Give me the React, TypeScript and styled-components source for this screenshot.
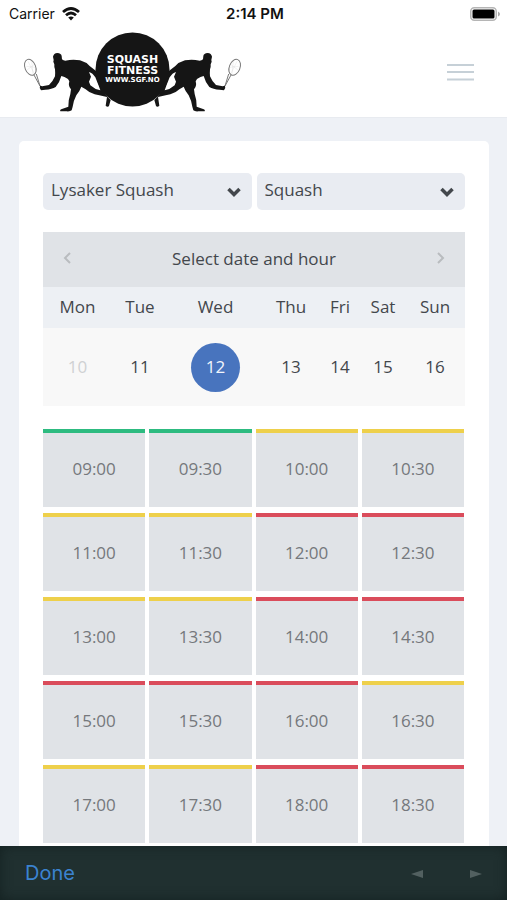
import React, { useState } from "react";
import styled, { createGlobalStyle } from "styled-components";

const GlobalStyle = createGlobalStyle`
  *, *::before, *::after { box-sizing: border-box; }
  body { margin: 0; background: #eef1f6; color: #43474c; font: 17px/24px "Open Sans", "Noto Sans", sans-serif; }
  button, select { font: inherit; color: inherit; border: 0; margin: 0; padding: 0; background: none; cursor: pointer; }
`;

const Screen = styled.div`
  display: flex;
  flex-direction: column;
  height: 100vh;
`;

const StatusBar = styled.div`
  display: grid;
  grid-template-columns: 1fr auto 1fr;
  align-items: center;
  height: 28px;
  padding: 0 6px 0 9px;
  background: #fff;
  color: #111;
  font: 14px/28px Inter, sans-serif;
`;

const Carrier = styled.span`
  display: flex;
  align-items: center;
  gap: 7px;
`;

const Clock = styled.span`
  font-size: 15px;
  font-weight: 600;
`;

const BatteryIcon = styled.svg`
  justify-self: end;
`;

const Header = styled.header`
  display: flex;
  justify-content: space-between;
  align-items: center;
  height: 90px;
  padding: 0 33px 2px 20px;
  background: #fff;
  border-bottom: 1px solid #e8ebf0;
`;

const LogoLink = styled.a`
  display: flex;
`;

const MenuButton = styled.button`
  display: flex;
`;

const Main = styled.main`
  flex: 1;
  min-height: 0;
  display: flex;
  flex-direction: column;
  overflow: hidden auto;
  padding: 23px 18px 0 19px;
`;

const Card = styled.section`
  flex: 1 0 auto;
  padding: 32px 24px 0;
  background: #fff;
  border-radius: 5px 5px 0 0;
`;

const Filters = styled.form`
  display: grid;
  grid-template-columns: 1fr 1fr;
  gap: 5px;
  margin-bottom: 22px;
`;

const SelectField = styled.label`
  position: relative;
  display: block;
`;

const Select = styled.select`
  display: block;
  width: 100%;
  height: 37px;
  padding: 0 32px 4px 8px;
  appearance: none;
  background: #e9ecf2;
  border-radius: 5px;
`;

const SelectArrow = styled.svg`
  position: absolute;
  right: 11px;
  top: 14px;
  pointer-events: none;
`;

const Calendar = styled.section`
  margin-bottom: 23px;
`;

const CalendarHead = styled.div`
  display: flex;
  justify-content: space-between;
  align-items: center;
  height: 55px;
  padding: 0 18px 2px;
  background: #e0e3e7;
`;

const CalendarTitle = styled.h1`
  margin: 0;
  font: inherit;
`;

const StepButton = styled.button`
  display: flex;
  padding: 4px 0 6px;
`;

const WeekTable = styled.table`
  width: 100%;
  table-layout: fixed;
  border-collapse: collapse;
  text-align: center;
`;

const DayName = styled.th`
  height: 41px;
  padding: 0 0 2px;
  background: #edf0f4;
  font-weight: 400;
`;

const DateCell = styled.td`
  height: 78px;
  padding: 0;
  background: #f8f8f8;
`;

const DateButton = styled.button<{ $selected: boolean }>`
  width: ${(p) => (p.$selected ? "49px" : "32px")};
  height: 49px;
  border-radius: 50%;
  background: ${(p) => (p.$selected ? "#4874be" : "transparent")};
  color: ${(p) => (p.$selected ? "#f2f6fc" : "inherit")};
  &:disabled { color: #cfd1d3; cursor: default; }
`;

const slotColors = { free: "#2dbb80", partial: "#eed04b", full: "#da4c5b" };
type Availability = keyof typeof slotColors;

const SlotGrid = styled.div`
  display: grid;
  grid-template-columns: repeat(4, 1fr);
  gap: 6px 4px;
  padding-right: 1px;
`;

const Slot = styled.button<{ $state: Availability }>`
  height: 78px;
  padding-bottom: 2px;
  border-top: 4px solid ${(p) => slotColors[p.$state]};
  background: #e0e3e7;
  color: #75787c;
`;

const Toolbar = styled.footer`
  display: flex;
  justify-content: space-between;
  align-items: center;
  flex: none;
  height: 54px;
  padding: 0 25px;
  background: #203030;
  box-shadow: inset 0 0 12px #142121;
`;

const DoneButton = styled.button`
  color: #3b83d0;
  font: 20px/24px Inter, sans-serif;
`;

const HistoryButtons = styled.div`
  display: flex;
  gap: 47px;
`;

const HistoryButton = styled.button`
  display: flex;
  padding-top: 2px;
`;

function Player() {
  return (
    <g>
      <g fill="none" stroke="#777">
        <ellipse cx="31" cy="118" rx="16" ry="25" transform="rotate(-22 31 118)" strokeWidth="3" />
        <path d="M24 100L42 136M35 98L39 139M19 115L46 118M21 126L45 108" strokeWidth="1" opacity=".3" />
        <path d="M42 141L60 174M49 138L60 174" strokeWidth="3" />
      </g>
      <path
        fill="#151515"
        fillRule="evenodd"
        d="M99 86Q101 76 112 75Q124 76 125 84L126 94Q130 98 136 98Q158 93 180 97Q198 102 209 114Q225 127 246 142L250 188L262 206L272 216L267 234Q263 239 257 233L261 207Q240 203 224 199Q208 195 197 184L184 176Q179 190 169 202Q161 217 158 236L155 247Q150 251 140 250L121 250Q118 244 128 242L145 236Q145 214 151 198L153 184Q144 174 148 160L144 153Q133 146 124 144Q119 163 107 177Q96 184 76 185L63 187Q57 181 60 173L67 175L87 171Q98 162 105 145Q106 135 105 124Q102 118 103 109L100 101L101 96ZM207 132L213 146L207 161L211 172Q224 184 241 187L235 170L226 148Q218 135 207 132Z"
      />
    </g>
  );
}

function Logo() {
  return (
    <svg width="224" height="84" viewBox="20 30 224 84" role="img" aria-label="Squash Fitness">
      <g transform="translate(20 28) scale(.3333)"><Player /></g>
      <g transform="translate(245 28) scale(-.3333 .3333)"><Player /></g>
      <circle cx="132.5" cy="69.5" r="37" fill="#151515" />
      <g fill="#fff" textAnchor="middle" fontFamily="DejaVu Sans, sans-serif" fontWeight="700">
        <text x="132.5" y="63" fontSize="11">SQUASH</text>
        <text x="132.5" y="74" fontSize="11">FITNESS</text>
        <text x="132.5" y="82" fontSize="7">WWW.SGF.NO</text>
      </g>
    </svg>
  );
}

function FilterSelect({ label, options }: { label: string; options: string[] }) {
  return (
    <SelectField>
      <Select aria-label={label}>
        {options.map((o) => <option key={o}>{o}</option>)}
      </Select>
      <SelectArrow width="14" height="10" viewBox="0 0 14 10" fill="none" stroke="#43474c" strokeWidth="3.500" aria-hidden="true">
        <path d="M1.500 2L7 7.500L12.500 2" />
      </SelectArrow>
    </SelectField>
  );
}

// Column widths are shared out in proportion across the table.
const week = [
  { name: "Mon", date: 10, width: 69 },
  { name: "Tue", date: 11, width: 56 },
  { name: "Wed", date: 12, width: 95 },
  { name: "Thu", date: 13, width: 56 },
  { name: "Fri", date: 14, width: 42 },
  { name: "Sat", date: 15, width: 44 },
  { name: "Sun", date: 16, width: 60 },
];

const slots: [string, Availability][] = [
  ["09:00", "free"], ["09:30", "free"], ["10:00", "partial"], ["10:30", "partial"],
  ["11:00", "partial"], ["11:30", "partial"], ["12:00", "full"], ["12:30", "full"],
  ["13:00", "partial"], ["13:30", "partial"], ["14:00", "full"], ["14:30", "full"],
  ["15:00", "full"], ["15:30", "full"], ["16:00", "full"], ["16:30", "partial"],
  ["17:00", "partial"], ["17:30", "partial"], ["18:00", "full"], ["18:30", "full"],
];

export default function App() {
  const [selected, setSelected] = useState(12);
  return (
    <Screen>
      <GlobalStyle />
      <StatusBar>
        <Carrier>
          Carrier
          <svg width="18" height="14" viewBox="0 0 18 14" fill="none" stroke="#111" strokeWidth="2.800" aria-hidden="true">
            <path d="M1 5Q9-2 17 5M4 8.200Q9 3.800 14 8.200" />
            <path d="M6.200 10.500Q9 8.300 11.800 10.500L9 13.500Z" fill="#111" stroke="none" />
          </svg>
        </Carrier>
        <Clock>2:14 PM</Clock>
        <BatteryIcon width="31" height="14" viewBox="0 0 31 14" aria-hidden="true">
          <rect x=".75" y=".75" width="25.500" height="12.500" rx="3.500" fill="#fff" stroke="#b5b5b5" strokeWidth="1.500" />
          <rect x="2.500" y="2.500" width="22" height="9" rx="1.500" fill="#000" />
          <path d="M28 4.500Q30 5.500 30 7Q30 8.500 28 9.500Z" fill="#aaa" />
        </BatteryIcon>
      </StatusBar>
      <Header>
        <LogoLink href="#"><Logo /></LogoLink>
        <MenuButton aria-label="Menu">
          <svg width="27" height="18" viewBox="0 0 27 18" stroke="#c6d0d7" strokeWidth="2">
            <path d="M0 2H27M0 9H27M0 16.500H27" />
          </svg>
        </MenuButton>
      </Header>
      <Main>
        <Card>
          <Filters>
            <FilterSelect label="Location" options={["Lysaker Squash"]} />
            <FilterSelect label="Activity" options={["Squash"]} />
          </Filters>
          <Calendar>
            <CalendarHead>
              <StepButton aria-label="Previous week">
                <svg width="12" height="12" viewBox="0 0 12 12" fill="none" stroke="#b9bcbf" strokeWidth="2"><path d="M9 1L4 6L9 11" /></svg>
              </StepButton>
              <CalendarTitle>Select date and hour</CalendarTitle>
              <StepButton aria-label="Next week">
                <svg width="12" height="12" viewBox="0 0 12 12" fill="none" stroke="#b9bcbf" strokeWidth="2"><path d="M3 1L8 6L3 11" /></svg>
              </StepButton>
            </CalendarHead>
            <WeekTable>
              <colgroup>{week.map((d) => <col key={d.name} width={d.width} />)}</colgroup>
              <thead>
                <tr>{week.map((d) => <DayName key={d.name} scope="col">{d.name}</DayName>)}</tr>
              </thead>
              <tbody>
                <tr>
                  {week.map((d) => (
                    <DateCell key={d.date}>
                      <DateButton $selected={d.date === selected} disabled={d.date < 11} onClick={() => setSelected(d.date)}>
                        {d.date}
                      </DateButton>
                    </DateCell>
                  ))}
                </tr>
              </tbody>
            </WeekTable>
          </Calendar>
          <SlotGrid>
            {slots.map(([time, state]) => <Slot key={time} $state={state}>{time}</Slot>)}
          </SlotGrid>
        </Card>
      </Main>
      <Toolbar>
        <DoneButton>Done</DoneButton>
        <HistoryButtons>
          <HistoryButton aria-label="Back">
            <svg width="12" height="8" viewBox="0 0 12 8" fill="#526060"><path d="M0 4L12 0V8Z" /></svg>
          </HistoryButton>
          <HistoryButton aria-label="Forward">
            <svg width="12" height="8" viewBox="0 0 12 8" fill="#526060"><path d="M12 4L0 0V8Z" /></svg>
          </HistoryButton>
        </HistoryButtons>
      </Toolbar>
    </Screen>
  );
}
